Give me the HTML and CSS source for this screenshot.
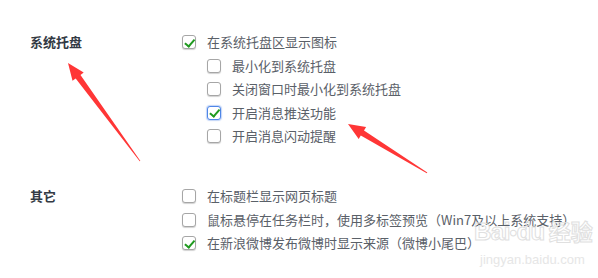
FILE: index.html
```html
<!DOCTYPE html>
<html lang="zh-CN">
<head>
<meta charset="utf-8">
<title>设置</title>
<link rel="stylesheet" href="styles.css">
</head>
<body>
<div class="page">
  <section class="group">
    <div class="label">系统托盘</div>
    <div class="options">
      <div class="row"><span class="cb checked"></span><span class="txt">在系统托盘区显示图标</span></div>
      <div class="row sub"><span class="cb"></span><span class="txt">最小化到系统托盘</span></div>
      <div class="row sub"><span class="cb"></span><span class="txt">关闭窗口时最小化到系统托盘</span></div>
      <div class="row sub"><span class="cb checked focus"></span><span class="txt">开启消息推送功能</span></div>
      <div class="row sub"><span class="cb"></span><span class="txt">开启消息闪动提醒</span></div>
    </div>
  </section>
  <section class="group second">
    <div class="label">其它</div>
    <div class="options">
      <div class="row"><span class="cb"></span><span class="txt">在标题栏显示网页标题</span></div>
      <div class="row"><span class="cb"></span><span class="txt">鼠标悬停在任务栏时，使用多标签预览（Win7及以上系统支持）</span></div>
      <div class="row"><span class="cb checked"></span><span class="txt">在新浪微博发布微博时显示来源（微博小尾巴）</span></div>
    </div>
  </section>
</div>
<div class="watermark">
  <div class="wm-logo">Bai<span class="paw">&#x2022;</span>du<span class="wm-cn">经验</span></div>
  <div class="wm-url">jingyan.baidu.com</div>
</div>
<svg class="arrows" width="598" height="278" viewBox="0 0 598 278" xmlns="http://www.w3.org/2000/svg">
  <polygon fill="#ff3636" points="68,63 83.7,72.6 80.5,74.9 140.4,161 139.7,161.3 75.7,78.5 72.5,80.8"/>
  <polygon fill="#ff3636" points="348,124 366.1,127.1 364,130.5 427.3,172.6 426.8,173.3 360.8,135.5 358.7,138.9"/>
</svg>
</body>
</html>
```

FILE: styles.css
```css
html, body {
  margin: 0;
  padding: 0;
  background: #ffffff;
}

body {
  width: 598px;
  height: 278px;
  overflow: hidden;
  position: relative;
  font-family: "Microsoft YaHei", "Noto Sans CJK SC", "Noto Sans", sans-serif;
  font-size: 13px;
}

.page {
  padding: 30px 0 0 30px;
}

.group {
  display: grid;
  grid-template-columns: 151px 1fr;
}

.group.second {
  margin-top: 36.5px;
}

.label {
  font-weight: bold;
  color: #333a44;
  line-height: 23.5px;
  height: 23.5px;
}

.options {
  display: flex;
  flex-direction: column;
}

.row {
  display: flex;
  align-items: center;
  height: 23.5px;
  color: #5a6068;
  white-space: nowrap;
}

.row.sub {
  padding-left: 25px;
}

.cb {
  box-sizing: border-box;
  width: 14px;
  height: 14px;
  margin: 1px 11px 0 1px;
  border: 1px solid #a6a6a6;
  border-radius: 3px;
  background: #fff;
  box-shadow: 0 1px 1px rgba(0, 0, 0, 0.18);
  position: relative;
  flex: none;
}

.cb.focus {
  border-color: #4f86e8;
  box-shadow: 0 0 1px 1px rgba(79, 134, 232, 0.35);
}

.cb.checked::after {
  content: "";
  position: absolute;
  left: 4px;
  top: 0.5px;
  width: 3.5px;
  height: 7.5px;
  border-right: 2.5px solid #1f9a1f;
  border-bottom: 2.5px solid #1f9a1f;
  transform: rotate(40deg);
}

.watermark {
  position: absolute;
  left: 474px;
  top: 217px;
  width: 120px;
  white-space: nowrap;
  font-family: "Liberation Sans", "Noto Sans CJK SC", sans-serif;
  pointer-events: none;
}

.wm-logo {
  font-size: 24px;
  font-weight: bold;
  line-height: 29px;
  color: transparent;
  -webkit-text-stroke: 1px #e0e0e0;
  letter-spacing: -0.5px;
}

.wm-logo .paw {
  font-size: 20px;
}

.wm-logo .wm-cn {
  font-size: 22px;
  margin-left: 4px;
  letter-spacing: 0;
}

.wm-url {
  font-size: 13px;
  line-height: 16px;
  margin-top: 4px;
  padding-left: 6px;
  color: #e6e6e6;
}

.arrows {
  position: absolute;
  left: 0;
  top: 0;
  pointer-events: none;
}
```
